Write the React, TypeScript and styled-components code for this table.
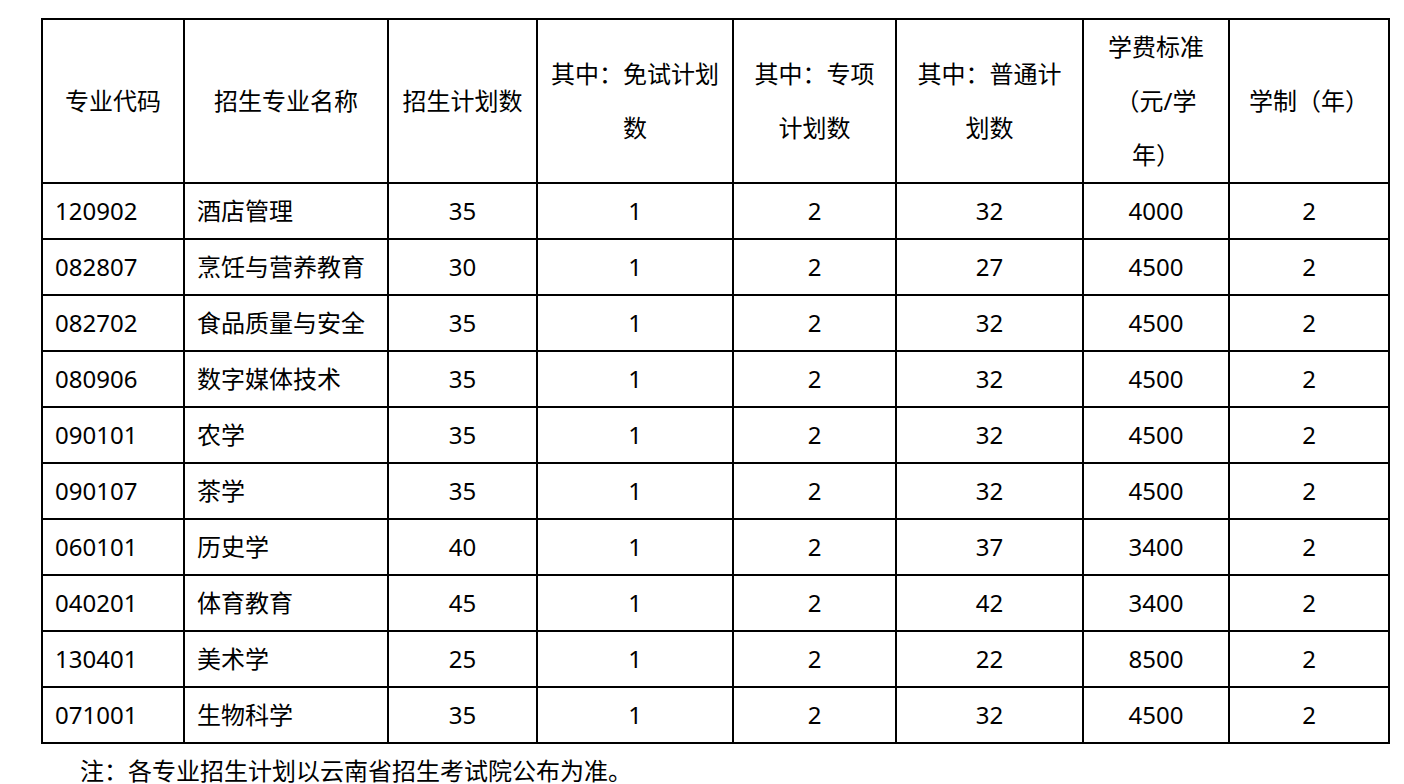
import { FC } from 'react';
import styled, { createGlobalStyle } from 'styled-components';

type Row = {
  code: string;
  name: string;
  plan: number;
  exempt: number;
  special: number;
  general: number;
  fee: number;
  years: number;
};

const rows: Row[] = [
  { code: '120902', name: '酒店管理', plan: 35, exempt: 1, special: 2, general: 32, fee: 4000, years: 2 },
  { code: '082807', name: '烹饪与营养教育', plan: 30, exempt: 1, special: 2, general: 27, fee: 4500, years: 2 },
  { code: '082702', name: '食品质量与安全', plan: 35, exempt: 1, special: 2, general: 32, fee: 4500, years: 2 },
  { code: '080906', name: '数字媒体技术', plan: 35, exempt: 1, special: 2, general: 32, fee: 4500, years: 2 },
  { code: '090101', name: '农学', plan: 35, exempt: 1, special: 2, general: 32, fee: 4500, years: 2 },
  { code: '090107', name: '茶学', plan: 35, exempt: 1, special: 2, general: 32, fee: 4500, years: 2 },
  { code: '060101', name: '历史学', plan: 40, exempt: 1, special: 2, general: 37, fee: 3400, years: 2 },
  { code: '040201', name: '体育教育', plan: 45, exempt: 1, special: 2, general: 42, fee: 3400, years: 2 },
  { code: '130401', name: '美术学', plan: 25, exempt: 1, special: 2, general: 22, fee: 8500, years: 2 },
  { code: '071001', name: '生物科学', plan: 35, exempt: 1, special: 2, general: 32, fee: 4500, years: 2 },
];

const colWidths = [142, 204, 149, 196, 163, 187, 146, 160];

const headers: string[][] = [
  ['专业代码'],
  ['招生专业名称'],
  ['招生计划数'],
  ['其中：免试计划', '数'],
  ['其中：专项', '计划数'],
  ['其中：普通计', '划数'],
  ['学费标准', '（元/学', '年）'],
  ['学制（年）'],
];

const GlobalStyle = createGlobalStyle`
  html, body {
    margin: 0;
    padding: 0;
    background: #fff;
  }
  body {
    font-family: "Noto Sans", "Noto Sans CJK SC", sans-serif;
    color: #000;
  }
`;

const Page = styled.div`
  width: 1404px;
  height: 784px;
  overflow: hidden;
  padding: 18px 0 0 41px;
  box-sizing: border-box;
`;

const Table = styled.table`
  border-collapse: collapse;
  table-layout: fixed;
  width: 1348px;
  font-size: 24px;
`;

const HeadCell = styled.th`
  border: 2px solid #000;
  height: 164px;
  padding: 0 10px;
  box-sizing: border-box;
  font-weight: 400;
  line-height: 54px;
  text-align: center;
  vertical-align: middle;
  white-space: nowrap;
`;

const Cell = styled.td<{ $left?: boolean }>`
  border: 2px solid #000;
  height: 56px;
  padding: 0 ${(p) => (p.$left ? '12px' : '6px')};
  box-sizing: border-box;
  line-height: 54px;
  text-align: ${(p) => (p.$left ? 'left' : 'center')};
  vertical-align: middle;
  white-space: nowrap;
`;

const Note = styled.p`
  margin: 0;
  padding-left: 39px;
  font-size: 24px;
  line-height: 54px;
`;

const App: FC = () => (
  <>
    <GlobalStyle />
    <Page>
      <Table>
        <colgroup>
          {colWidths.map((w, i) => (
            <col key={i} style={{ width: w }} />
          ))}
        </colgroup>
        <thead>
          <tr>
            {headers.map((lines, i) => (
              <HeadCell key={i}>
                {lines.map((l, j) => (
                  <div key={j}>{l}</div>
                ))}
              </HeadCell>
            ))}
          </tr>
        </thead>
        <tbody>
          {rows.map((r) => (
            <tr key={r.code}>
              <Cell $left>{r.code}</Cell>
              <Cell $left>{r.name}</Cell>
              <Cell>{r.plan}</Cell>
              <Cell>{r.exempt}</Cell>
              <Cell>{r.special}</Cell>
              <Cell>{r.general}</Cell>
              <Cell>{r.fee}</Cell>
              <Cell>{r.years}</Cell>
            </tr>
          ))}
        </tbody>
      </Table>
      <Note>注：各专业招生计划以云南省招生考试院公布为准。</Note>
    </Page>
  </>
);

export default App;
